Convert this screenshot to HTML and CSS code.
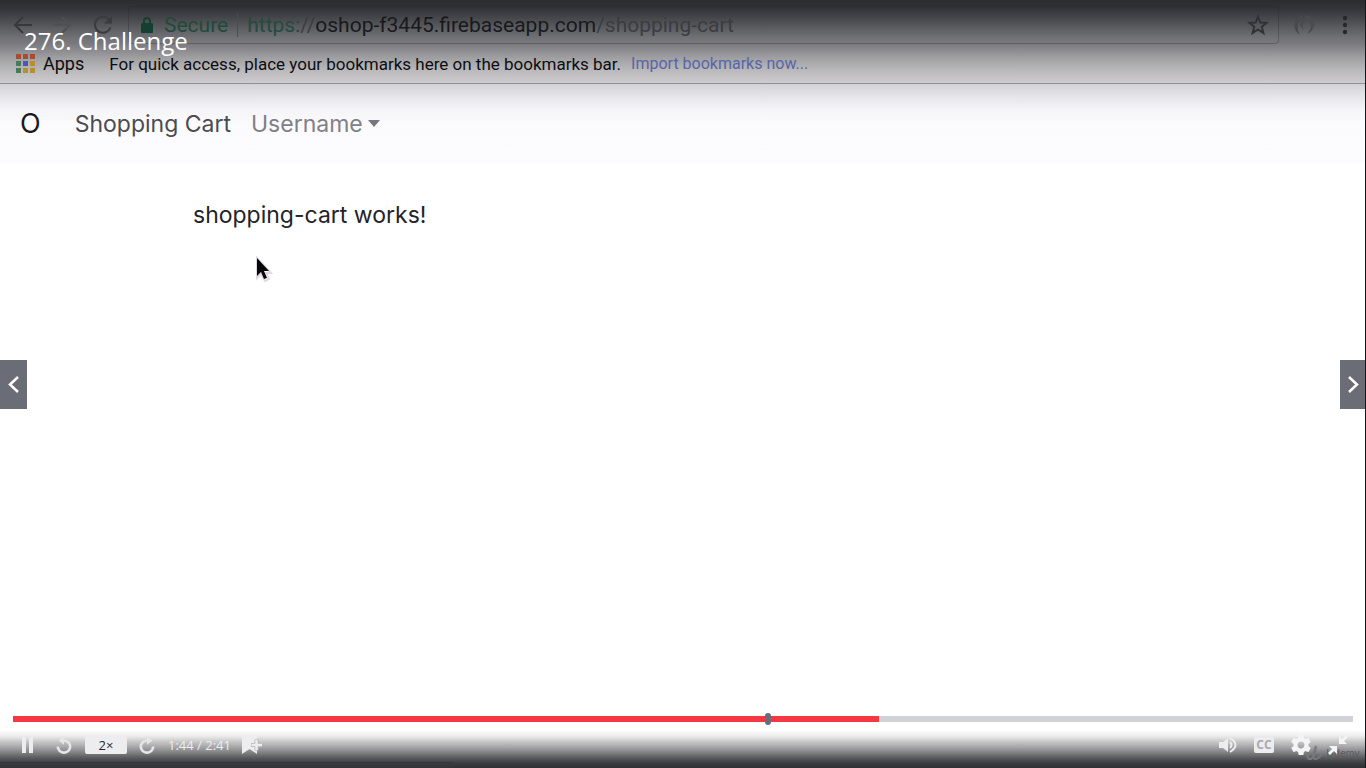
FILE: index.html
```html
<!DOCTYPE html>
<html lang="en">
<head>
<meta charset="utf-8">
<title>276. Challenge</title>
<link rel="stylesheet" href="styles.css">
</head>
<body>
<div class="player">
  <h1 class="lecture-title">276. Challenge</h1>
  <header class="browser">
    <div class="toolbar">
      <button class="icon-button back" aria-label="Back"><svg width="20" height="20" viewBox="0 0 20 20"><path d="M19 10H2M10 2L2 10l8 8" fill="none" stroke="#37383c" stroke-width="2"/></svg></button>
      <button class="icon-button forward" aria-label="Forward"><svg width="20" height="20" viewBox="0 0 20 20"><path d="M1 10h17M10 2l8 8-8 8" fill="none" stroke="#4f5055" stroke-width="2"/></svg></button>
      <button class="icon-button reload" aria-label="Reload"><svg width="22" height="22" viewBox="0 0 22 22"><path d="M17 5.500A8 8 0 1 0 18.500 13.500" fill="none" stroke="#3a3b3f" stroke-width="2"/><path d="M20 1.500V9.500H12z" fill="#3a3b3f"/></svg></button>
      <div class="address">
        <svg width="12" height="16" viewBox="0 0 12 16"><path d="M3 7V4a3 3 0 0 1 6 0v3" fill="none" stroke="#173f31" stroke-width="2"/><rect y="6" width="12" height="10" rx="1" fill="#173f31"/></svg>
        <span class="secure">Secure</span>
        <span class="url"><span class="scheme">https</span><span class="dim">://</span>oshop-f3445.firebaseapp.com<span class="dim">/shopping-cart</span></span>
        <button class="icon-button star" aria-label="Bookmark this page"><svg width="22" height="22" viewBox="0 0 22 22"><path d="M11 2.500l2.300 6 6.200.300-4.800 4 1.700 6.200-5.400-3.500-5.400 3.500 1.700-6.200-4.800-4 6.200-.300z" fill="none" stroke="#303136" stroke-width="2"/></svg></button>
      </div>
      <button class="icon-button extension" aria-label="Extension"><svg width="24" height="24" viewBox="0 0 24 24"><path d="M12 2C1 4-1 16 8 22 5 16 5 12 7 9c1-3 3-4 5-7z" fill="#48494d"/><path d="M13 2c11 1 13 14 2 19 4-5 5-9 2-13-5-2-8 3-5 9-5-4-5-9 0-11 2-1 2-3 1-4z" fill="#4a4b50"/></svg></button>
      <button class="icon-button menu" aria-label="Menu"><svg width="6" height="20" viewBox="0 0 6 20" fill="#27282c"><circle cx="3" cy="3" r="2.200"/><circle cx="3" cy="10" r="2.200"/><circle cx="3" cy="17" r="2.200"/></svg></button>
    </div>
    <div class="bookmarks">
      <a class="apps" href="#"><svg width="19" height="19" viewBox="0 0 19 19"><path d="M0 0h5v5H0zM7 0h5v5H7zM14 0h5v5h-5z" fill="#a84c32"/><path d="M0 7h5v5H0zM0 14h5v5H0z" fill="#467b5b"/><path d="M7 7h5v5H7z" fill="#4859b5"/><path d="M14 7h5v5h-5zM7 14h5v5H7zM14 14h5v5h-5z" fill="#b59030"/></svg>Apps</a>
      <span>For quick access, place your bookmarks here on the bookmarks bar.</span>
      <a class="import" href="#">Import bookmarks now...</a>
    </div>
  </header>
  <nav class="navbar">
    <a class="brand" href="#">O</a>
    <a class="cart" href="#">Shopping Cart</a>
    <button class="username">Username <svg width="12" height="7" viewBox="0 0 12 7"><path d="M0 0h12L6 7z" fill="#77767c"/></svg></button>
  </nav>
  <main class="page">
    <p class="message">shopping-cart works!</p>
    <svg class="cursor" width="22" height="30" viewBox="0 0 22 30"><path d="M4 3v20l4-4 4 7 4-2-3-6h5z" fill="#fff" stroke="#dedbe0" stroke-width="2"/><path d="M4 3v18l4-4 3 7 3-1-3-7h5z" fill="#08080b"/></svg>
  </main>
  <button class="step previous" aria-label="Previous lecture"><svg width="12" height="18" viewBox="0 0 12 18"><path d="M10 1L2 8.500l8 7.500" fill="none" stroke="#fff" stroke-width="2.500"/></svg></button>
  <button class="step next" aria-label="Next lecture"><svg width="12" height="18" viewBox="0 0 12 18"><path d="M2 1l8 7.500-8 7.500" fill="none" stroke="#fff" stroke-width="2.500"/></svg></button>
  <footer class="controls">
    <div class="progress"><div class="played" style="width:64.600%"></div><span class="marker" style="left:56.100%"></span></div>
    <div class="status-strip"></div>
    <div class="watermark"><svg width="22" height="16" viewBox="0 0 22 16"><path d="M1 4q5-6 4 3-2 8 3 7 4-3 5-13-5 14 0 13 4-1 6-6" fill="none" stroke="#77787b" stroke-width="2"/></svg>Udemy</div>
    <div class="control-row">
      <button class="icon-button pause" aria-label="Pause"><svg width="12" height="16" viewBox="0 0 12 16" fill="#ededf0"><path d="M0 0h4v16H0zM7 0h4v16H7z"/></svg></button>
      <button class="icon-button rewind" aria-label="Rewind"><svg width="16" height="18" viewBox="3.500 1 17 20.500"><path d="M12 5V1L6 6l6 5V7.500c3 0 5.500 2.500 5.500 5.500s-2.500 5.500-5.500 5.500-5.500-2.500-5.500-5.500h-3c0 4.600 3.800 8.400 8.500 8.400s8.500-3.800 8.500-8.400S16.700 5 12 5z" fill="#e6e6e9"/></svg></button>
      <button class="speed">2×</button>
      <button class="icon-button skip" aria-label="Forward 15 seconds"><svg width="16" height="18" viewBox="3.500 1 17 20.500"><path d="M12 5V1l6 5-6 5V7.500c-3 0-5.500 2.500-5.500 5.500s2.500 5.500 5.500 5.500 5.500-2.500 5.500-5.500h3c0 4.600-3.800 8.400-8.500 8.400S3.500 17.600 3.500 13 7.300 5 12 5z" fill="#e6e6e9"/></svg></button>
      <span class="time">1:44 / 2:41</span>
      <button class="icon-button note" aria-label="Add bookmark"><svg width="20" height="20" viewBox="0 0 20 20"><path d="M0 1h15v18l-7.500-5L0 19z" fill="#ededf0"/><path d="M14.500 4.500v11M9 10h11" stroke="#b4b4b7" stroke-width="4"/><path d="M14.500 5v10M9.500 10H20" stroke="#ededf0" stroke-width="2.500"/></svg></button>
      <span class="spacer"></span>
      <button class="icon-button volume" aria-label="Volume"><svg width="18" height="16" viewBox="0 0 18 16"><path d="M0 5h4l5-4v14l-5-4H0z" fill="#ededf0"/><path d="M11 5q3 3 0 6M11 1q11 7 0 14" fill="none" stroke="#ededf0" stroke-width="2"/></svg></button>
      <button class="captions">CC</button>
      <button class="icon-button settings" aria-label="Settings"><svg width="20" height="20" viewBox="2 2 20 20"><path fill="#f4f4f6" d="M19.430 12.980c.040-.320.070-.640.070-.980s-.030-.660-.070-.980l2.110-1.650c.190-.150.240-.420.120-.640l-2-3.460c-.120-.220-.390-.300-.610-.220l-2.490 1c-.520-.400-1.080-.730-1.690-.980l-.380-2.650C14.460 2.180 14.250 2 14 2h-4c-.250 0-.460.180-.490.420l-.380 2.650c-.610.250-1.170.590-1.690.980l-2.490-1c-.230-.090-.490 0-.610.220l-2 3.460c-.130.220-.070.490.120.640l2.110 1.650c-.040.320-.070.650-.070.980s.030.660.070.980l-2.110 1.650c-.190.150-.240.420-.120.640l2 3.460c.120.220.390.300.610.220l2.490-1c.520.400 1.080.730 1.690.980l.380 2.650c.030.240.240.420.490.420h4c.250 0 .460-.180.490-.420l.380-2.650c.610-.250 1.170-.590 1.690-.980l2.490 1c.230.090.490 0 .610-.220l2-3.460c.120-.220.070-.490-.120-.640l-2.110-1.650zM12 15.500c-1.930 0-3.500-1.570-3.500-3.500s1.570-3.500 3.500-3.500 3.500 1.570 3.500 3.500-1.570 3.500-3.500 3.500z"/></svg></button>
      <button class="icon-button fullscreen" aria-label="Exit full screen"><svg width="20" height="20" viewBox="0 0 20 20"><path d="M11 1v8h8l-3-3 4-4-2-2-4 4zM9 19v-8H1l3 3-4 4 2 2 4-4z" fill="#f4f4f6"/></svg></button>
    </div>
  </footer>
</div>
</body>
</html>
```
FILE: styles.css
```css
* { box-sizing: border-box; }

body {
  margin: 0;
  background: #fff;
  font-family: Inter, "Noto Sans", sans-serif;
}

a { color: inherit; text-decoration: none; }

button {
  border: 0;
  padding: 0;
  background: none;
  color: inherit;
  font: inherit;
}

svg { display: block; flex: none; }

.icon-button { display: flex; flex: none; }

.player {
  position: relative;
  display: flex;
  flex-direction: column;
  min-height: 100vh;
  overflow: hidden;
  border-right: 1px solid #141518;
}

.lecture-title {
  position: absolute;
  top: 24px;
  left: 24px;
  margin: 0;
  color: #fff;
  font: 400 24px/34px "Open Sans", sans-serif;
}

.browser {
  border-bottom: 1px solid #919094;
  background: linear-gradient(#2b2c30 0, #323338 8px, #4a4b4f 20px, #717276 38px, #7b7b7f 44px, #a09fa2 58px, #b9b8bb 70px, #cecccf 83px);
  font-family: Roboto, sans-serif;
}

.toolbar {
  display: flex;
  align-items: center;
  height: 44px;
  padding: 5px 17px 0 13px;
}

.forward { margin-left: 19px; }
.reload { margin-left: 20px; }

.address {
  display: flex;
  flex: 1;
  align-items: center;
  height: 38px;
  margin: 0 13px 0 14px;
  padding: 0 9px 0 12px;
  border: 1px solid rgba(35, 36, 40, 0.3);
  border-radius: 4px;
  font-size: 21px;
}

.secure {
  margin-left: 11px;
  padding-right: 9px;
  border-right: 1px solid #4b4c50;
  color: #214a3a;
}

.url { margin-left: 9px; color: #18191d; }
.scheme { color: #244b3c; }
.dim { color: #3b3c41; }
.star { margin-left: auto; }
.menu { margin-left: 26px; }

.bookmarks {
  display: flex;
  align-items: center;
  height: 39px;
  padding-left: 16px;
  color: #0d0d12;
  font-size: 17px;
}

.apps {
  display: flex;
  align-items: center;
  gap: 8px;
  margin-right: 25px;
  font-size: 18px;
}

.import { margin-left: 10px; color: #5865a8; font-size: 16px; }

.navbar {
  display: flex;
  align-items: center;
  height: 79px;
  padding-left: 20px;
  background: linear-gradient(#d3d2d7 0, #e7e7eb 14px, #f5f5f8 26px, #fbfbfe 40px, #fcfcff 100%);
  color: #4c4b51;
  font-size: 23px;
}

.brand { color: #1a191e; font-size: 27px; }
.cart { margin-left: 34px; }

.username {
  display: flex;
  align-items: center;
  gap: 5px;
  margin-left: 20px;
  color: #818086;
}

.page {
  position: relative;
  flex: 1;
  padding: 37px 193px;
  color: #242329;
  font-size: 23px;
}

.message { margin: 0; line-height: 30px; }

.cursor { position: absolute; top: 92px; left: 253px; }

.step {
  position: absolute;
  top: 360px;
  display: flex;
  align-items: center;
  justify-content: center;
  height: 49px;
  background: #6a6c76;
}

.previous { left: 0; width: 27px; }
.next { right: 0; width: 25px; }

.controls {
  position: relative;
  background: linear-gradient(#fff 14px, #ededee 20px, #c5c5c6 26px, #a0a0a2 32px, #7d7e80 37px, #59595d 42px, #3d3e42 47px, #2e2f33 52px);
}

.progress {
  position: relative;
  height: 6px;
  margin: 0 12px 0 13px;
  background: #d1d2d7;
}

.played { height: 100%; background: #f53741; }

.marker {
  position: absolute;
  top: -3px;
  width: 6px;
  height: 12px;
  border-radius: 3px;
  background: #696c79;
}

.status-strip {
  position: absolute;
  bottom: 0;
  left: 0;
  width: 455px;
  height: 6px;
  border-top: 1px solid #35363a;
  border-radius: 0 4px 0 0;
  background: rgba(56, 57, 61, 0.5);
}

.control-row {
  position: relative;
  display: flex;
  align-items: center;
  height: 46px;
  padding: 0 17px 0 22px;
  color: #ededf0;
  font: 13px "Open Sans", sans-serif;
}

.rewind { margin-left: 22px; }

.speed {
  width: 42px;
  height: 18px;
  margin: 0 12px 0 13px;
  border-radius: 2px;
  background: #ededf0;
  color: #292a32;
  line-height: 18px;
}

.time { margin: 0 11px 0 13px; }
.spacer { flex: 1; }

.captions {
  width: 20px;
  height: 16px;
  margin: 0 17px;
  border-radius: 2px;
  background: #ededf0;
  color: #aaaaae;
  font-size: 12px;
  font-weight: 700;
  line-height: 16px;
}

.fullscreen { margin-left: 17px; }

.watermark {
  position: absolute;
  right: 5px;
  bottom: 7px;
  display: flex;
  align-items: center;
  gap: 1px;
  color: #5b5c60;
  font-size: 10px;
  pointer-events: none;
}
```
